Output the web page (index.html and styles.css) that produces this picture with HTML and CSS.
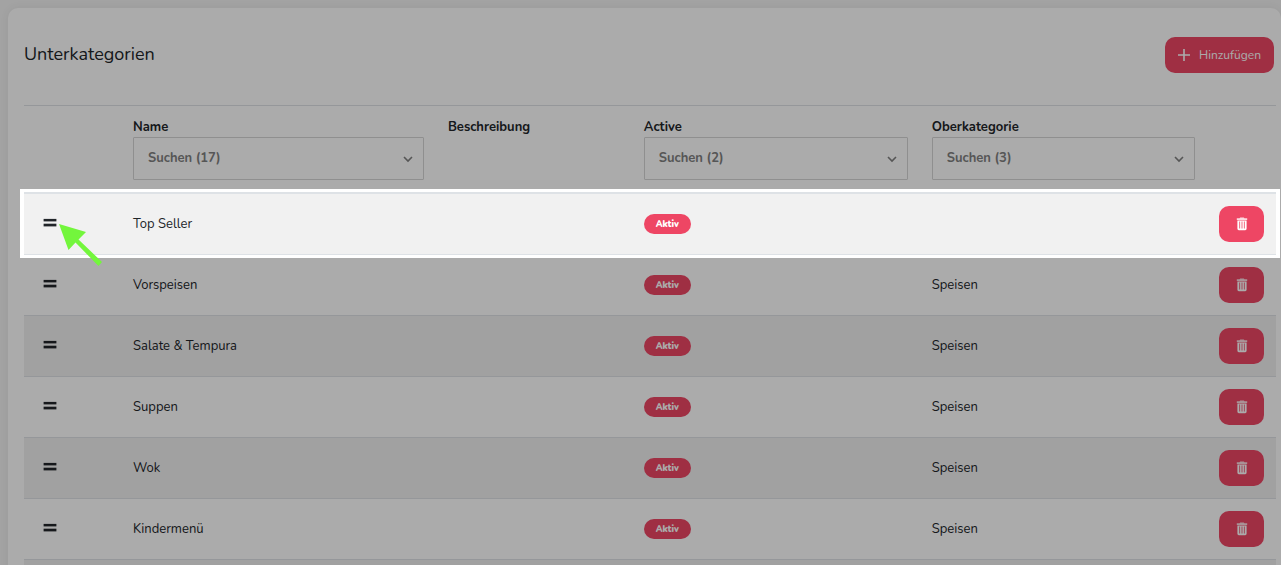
FILE: index.html
```html
<!DOCTYPE html>
<html lang="de">
<head>
    <meta charset="UTF-8">
    <meta name="viewport" content="width=device-width, initial-scale=1.0">
    <title>Unterkategorien</title>
    <link rel="stylesheet" href="styles.css">
</head>
<body>
    <svg class="sprite" aria-hidden="true">
        <symbol id="icon-handle" viewBox="0 0 16 12">
            <rect x="1.600" y=".9" width="12.800" height="2.500"/>
            <rect x="1.600" y="5.700" width="12.800" height="2.700"/>
        </symbol>
        <symbol id="icon-chevron" viewBox="0 0 10 8">
            <path d="M1 2l4 4 4-4" fill="none" stroke="currentColor" stroke-width="1.6"/>
        </symbol>
        <symbol id="icon-plus" viewBox="0 0 12 12">
            <path d="M6 0v12M0 6h12" stroke="currentColor" stroke-width="1.6"/>
        </symbol>
        <symbol id="icon-trash" viewBox="0 0 12 14">
            <path d="M3.500 1.300L4.200.5h3.600l.7.8h2.700v1.700H.8V1.300z" opacity=".8"/>
            <path fill-rule="evenodd" d="M1.400 3.400h9.200v8.400q0 1.400-1.400 1.400H2.800q-1.400 0-1.400-1.400zM3.300 4.500v6.900h.8V4.500zm2.300 0v6.900h.8V4.500zm2.300 0v6.900h.8V4.500z"/>
        </symbol>
    </svg>

    <div class="card">
        <div class="card-header">
            <h1>Unterkategorien</h1>
            <button type="button" class="btn btn-add">
                <svg width="12" height="12"><use href="#icon-plus"/></svg>
                Hinzufügen
            </button>
        </div>

        <table class="table">
            <colgroup>
                <col class="col-handle">
                <col class="col-name">
                <col class="col-description">
                <col class="col-active">
                <col class="col-parent">
                <col class="col-delete">
            </colgroup>
            <thead>
                <tr>
                    <th></th>
                    <th>
                        <label for="filter-name">Name</label>
                        <div class="filter">
                            <select id="filter-name"><option>Suchen (17)</option></select>
                            <svg width="10" height="8"><use href="#icon-chevron"/></svg>
                        </div>
                    </th>
                    <th>Beschreibung</th>
                    <th>
                        <label for="filter-active">Active</label>
                        <div class="filter">
                            <select id="filter-active"><option>Suchen (2)</option></select>
                            <svg width="10" height="8"><use href="#icon-chevron"/></svg>
                        </div>
                    </th>
                    <th>
                        <label for="filter-parent">Oberkategorie</label>
                        <div class="filter">
                            <select id="filter-parent"><option>Suchen (3)</option></select>
                            <svg width="10" height="8"><use href="#icon-chevron"/></svg>
                        </div>
                    </th>
                    <th></th>
                </tr>
            </thead>
            <tbody>
                <tr class="highlight">
                    <td>
                        <button type="button" class="handle"><svg width="16" height="12"><use href="#icon-handle"/></svg></button>
                        <svg class="arrow" width="44" height="42" viewBox="0 0 44 42">
                            <path d="M0 0L27 8 19.500 15.500 43 38 39.500 42 16.500 18.500 9.500 26z"/>
                        </svg>
                    </td>
                    <td>Top Seller</td>
                    <td></td>
                    <td><span class="badge">Aktiv</span></td>
                    <td></td>
                    <td><button type="button" class="btn btn-delete"><svg width="12" height="14"><use href="#icon-trash"/></svg></button></td>
                </tr>
                <tr>
                    <td><button type="button" class="handle"><svg width="16" height="12"><use href="#icon-handle"/></svg></button></td>
                    <td>Vorspeisen</td>
                    <td></td>
                    <td><span class="badge">Aktiv</span></td>
                    <td>Speisen</td>
                    <td><button type="button" class="btn btn-delete"><svg width="12" height="14"><use href="#icon-trash"/></svg></button></td>
                </tr>
                <tr>
                    <td><button type="button" class="handle"><svg width="16" height="12"><use href="#icon-handle"/></svg></button></td>
                    <td>Salate &amp; Tempura</td>
                    <td></td>
                    <td><span class="badge">Aktiv</span></td>
                    <td>Speisen</td>
                    <td><button type="button" class="btn btn-delete"><svg width="12" height="14"><use href="#icon-trash"/></svg></button></td>
                </tr>
                <tr>
                    <td><button type="button" class="handle"><svg width="16" height="12"><use href="#icon-handle"/></svg></button></td>
                    <td>Suppen</td>
                    <td></td>
                    <td><span class="badge">Aktiv</span></td>
                    <td>Speisen</td>
                    <td><button type="button" class="btn btn-delete"><svg width="12" height="14"><use href="#icon-trash"/></svg></button></td>
                </tr>
                <tr>
                    <td><button type="button" class="handle"><svg width="16" height="12"><use href="#icon-handle"/></svg></button></td>
                    <td>Wok</td>
                    <td></td>
                    <td><span class="badge">Aktiv</span></td>
                    <td>Speisen</td>
                    <td><button type="button" class="btn btn-delete"><svg width="12" height="14"><use href="#icon-trash"/></svg></button></td>
                </tr>
                <tr>
                    <td><button type="button" class="handle"><svg width="16" height="12"><use href="#icon-handle"/></svg></button></td>
                    <td>Kindermenü</td>
                    <td></td>
                    <td><span class="badge">Aktiv</span></td>
                    <td>Speisen</td>
                    <td><button type="button" class="btn btn-delete"><svg width="12" height="14"><use href="#icon-trash"/></svg></button></td>
                </tr>
                <tr>
                    <td colspan="6"></td>
                </tr>
            </tbody>
        </table>
    </div>
</body>
</html>
```

FILE: styles.css
```css
* {
    box-sizing: border-box;
}
body {
    margin: 0;
    height: 100vh;
    overflow: hidden;
    padding: 8px 0 0 8px;
    background-color: #f3f3f3;
    color: #212529;
    font-family: Nunito, Lato, sans-serif;
    font-size: 13px;
    line-height: 19px;
}
.sprite {
    display: none;
}
svg {
    display: block;
    fill: currentColor;
}
.card {
    padding: 29px 5px 0 16px;
    background-color: white;
    border-radius: 10px;
    box-shadow: 0 0 10px rgba(0, 0, 0, 0.06);
}
.card-header {
    display: flex;
    justify-content: space-between;
    align-items: flex-start;
    padding: 0 2px 32px 0;
}
h1 {
    margin: 0;
    font-size: 18px;
    font-weight: 400;
    line-height: 34px;
}
.btn {
    display: flex;
    align-items: center;
    justify-content: center;
    height: 36px;
    border: none;
    border-radius: 10px;
    background-color: #ee4664;
    color: white;
    font: inherit;
    cursor: pointer;
}
.btn-add {
    gap: 9px;
    padding: 0 13px;
    font-size: 12px;
}
.btn-delete {
    width: 45px;
    padding: 0;
}
.table {
    width: 100%;
    table-layout: fixed;
    border-collapse: separate;
    border-spacing: 0;
}
.col-handle {
    width: 7.75%;
}
.col-name {
    width: 25.15%;
}
.col-description {
    width: 15.65%;
}
.col-active {
    width: 23%;
}
.col-parent {
    width: 22.95%;
}
.col-delete {
    width: 5.5%;
}
th {
    padding: 12px;
    border-top: 1px solid #dee2e6;
    border-bottom: 2px solid #dee2e6;
    text-align: left;
    vertical-align: top;
    font-weight: 700;
}
th label {
    display: block;
}
.filter {
    position: relative;
}
.filter select {
    display: block;
    appearance: none;
    width: 100%;
    height: 43px;
    padding: 0 14px;
    border: 1px solid #d5d5d5;
    border-radius: 1px;
    background: white;
    color: #808080;
    font: inherit;
}
.filter svg {
    position: absolute;
    top: 18px;
    right: 11px;
    color: #808080;
    pointer-events: none;
}
td {
    height: 61px;
    padding: 0 12px;
    border-bottom: 1px solid #dee2e6;
}
tbody tr:nth-child(odd) {
    background-color: #f1f1f1;
}
.handle {
    display: block;
    padding: 0 6px;
    border: none;
    background: none;
    color: inherit;
    cursor: grab;
}
.badge {
    display: block;
    width: 47px;
    border-radius: 10px;
    background-color: #ee4664;
    color: white;
    font-size: 9px;
    font-weight: 900;
    line-height: 20px;
    text-align: center;
}
/* dims everything around the row */
.highlight {
    position: relative;
}
.highlight::after {
    content: "";
    position: absolute;
    inset: -5px -4px -3px;
    border: solid white;
    border-width: 3px 4px;
    box-shadow: 0 0 0 3000px rgba(0, 0, 0, 0.33);
    z-index: 1;
    pointer-events: none;
}
.arrow {
    position: absolute;
    top: 30px;
    left: 35px;
    color: #73f63c;
    z-index: 2;
}
```
